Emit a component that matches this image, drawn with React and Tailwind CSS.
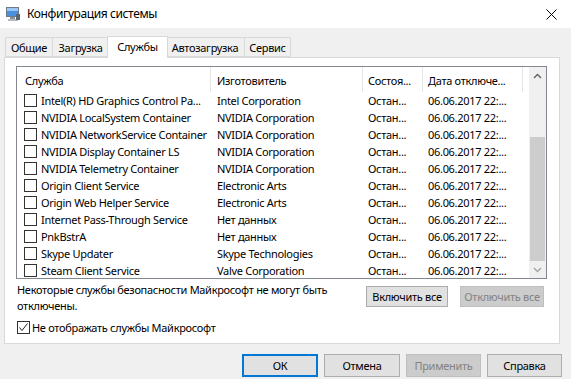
import React from 'react';

const services = [
  ['Intel(R) HD Graphics Control Pa...', 'Intel Corporation'],
  ['NVIDIA LocalSystem Container', 'NVIDIA Corporation'],
  ['NVIDIA NetworkService Container', 'NVIDIA Corporation'],
  ['NVIDIA Display Container LS', 'NVIDIA Corporation'],
  ['NVIDIA Telemetry Container', 'NVIDIA Corporation'],
  ['Origin Client Service', 'Electronic Arts'],
  ['Origin Web Helper Service', 'Electronic Arts'],
  ['Internet Pass-Through Service', 'Нет данных'],
  ['PnkBstrA', 'Нет данных'],
  ['Skype Updater', 'Skype Technologies'],
  ['Steam Client Service', 'Valve Corporation'],
];

const tabs = [
  ['Общие', 'w-[48px]'],
  ['Загрузка', 'w-[57px]'],
  ['Службы', 'w-[61px]'],
  ['Автозагрузка', 'w-[80px]'],
  ['Сервис', 'w-[47px]'],
];

function AppIcon() {
  return (
    <svg width="16" height="16" viewBox="0 0 16 16">
      <rect x="1" y="1" width="13" height="10" fill="#6d7a8c" />
      <rect x="2" y="2" width="11" height="8" fill="#4a8fe0" />
      <rect x="2" y="2" width="11" height="3" fill="#9cc7f5" />
      <rect x="5" y="11" width="5" height="2" fill="#8a8f96" />
      <rect x="3" y="13" width="10" height="2" fill="#b5b9bf" />
      <rect x="11" y="8" width="4" height="6" fill="#5c6470" />
    </svg>
  );
}

function Checkbox({ checked }) {
  return (
    <span className="w-[13px] h-[13px] border border-[#333333] bg-white flex items-center justify-center shrink-0">
      {checked && (
        <svg width="11" height="11" viewBox="0 0 11 11">
          <path d="M1.5 5.5 L4 8.5 L9.5 1.5" fill="none" stroke="#222" strokeWidth="1" />
        </svg>
      )}
    </span>
  );
}

function Button({ children, disabled, primary, className = '' }) {
  let cls = 'bg-[#e1e1e1] border border-[#adadad] text-black';
  if (disabled) cls = 'bg-[#cccccc] border border-[#bfbfbf] text-[#838383]';
  if (primary) cls = 'bg-[#e1e1e1] border-2 border-[#0078d7] text-black';
  return (
    <div className={`flex items-center justify-center whitespace-nowrap ${cls} ${className}`}>{children}</div>
  );
}

export default function App() {
  return (
    <div className="w-[571px] h-[379px] bg-[#f0f0f0] overflow-hidden text-[11px] tracking-[-0.3px] text-black font-['Noto_Sans',sans-serif] leading-none">
      {/* Title bar */}
      <div className="h-[28px] bg-white flex items-center pl-[5px] pr-[14px]">
        <AppIcon />
        <span className="ml-[6px] text-[12px] tracking-[-0.4px]">Конфигурация системы</span>
        <svg className="ml-auto" width="11" height="11" viewBox="0 0 11 11">
          <path d="M0.5 0.5 L10.5 10.5 M10.5 0.5 L0.5 10.5" stroke="#000" strokeWidth="1" />
        </svg>
      </div>

      {/* Tabs */}
      <div className="flex items-end h-[29px] pl-[5px]">
        {tabs.map(([t, w]) => (
          t === 'Службы' ? (
            <div key={t} className={`${w} h-[22px] -mx-[2px] bg-white border border-b-0 border-[#d9d9d9] flex items-center justify-center relative z-10 mb-[-1px] pb-[2px]`}>
              {t}
            </div>
          ) : (
            <div key={t} className={`${w} h-[20px] bg-[#f0f0f0] border border-[#d9d9d9] -ml-px first:ml-0 flex items-center justify-center`}>
              {t}
            </div>
          )
        ))}
      </div>

      {/* Panel */}
      <div className="mx-[4px] w-[556px] h-[287px] bg-white border border-[#d9d9d9] pt-[8px] pl-[11px] flex flex-col">
        {/* List */}
        <div className="w-[531px] h-[213px] border border-[#828790] flex">
          <div className="flex-1 flex flex-col overflow-hidden">
            <div className="h-[25px] flex shrink-0">
              <div className="w-[194px] pl-[8px] pt-[2px] flex items-center border-r border-[#e5e5e5]">Служба</div>
              <div className="w-[152px] pl-[6px] pt-[2px] flex items-center border-r border-[#e5e5e5]">Изготовитель</div>
              <div className="w-[60px] pl-[5px] pt-[2px] flex items-center border-r border-[#e5e5e5]">Состоя...</div>
              <div className="w-[100px] pl-[5px] pt-[2px] flex items-center border-r border-[#e5e5e5] whitespace-nowrap">Дата отключе...</div>
            </div>
            {services.map(([name, maker]) => (
              <div key={name} className="h-[17px] flex items-center shrink-0">
                <div className="w-[194px] pl-[7px] flex items-center gap-[4px]">
                  <Checkbox />
                  <span className="whitespace-nowrap">{name}</span>
                </div>
                <div className="w-[152px] pl-[6px] whitespace-nowrap">{maker}</div>
                <div className="w-[60px] pl-[5px] whitespace-nowrap">Остан...</div>
                <div className="w-[100px] pl-[5px] whitespace-nowrap">06.06.2017 22:...</div>
              </div>
            ))}
          </div>
          {/* Scrollbar */}
          <div className="w-[17px] bg-[#f0f0f0] flex flex-col">
            <div className="h-[17px] flex items-center justify-center">
              <svg width="9" height="6" viewBox="0 0 9 6">
                <path d="M1 5 L4.5 1.5 L8 5" fill="none" stroke="#606060" strokeWidth="1.4" />
              </svg>
            </div>
            <div className="flex-1 flex flex-col justify-end px-[1px]">
              <div className="h-[124px] bg-[#cdcdcd]" />
            </div>
            <div className="h-[17px] flex items-center justify-center">
              <svg width="9" height="6" viewBox="0 0 9 6">
                <path d="M1 1 L4.5 4.5 L8 1" fill="none" stroke="#a3a3a3" strokeWidth="1.4" />
              </svg>
            </div>
          </div>
        </div>

        {/* Notice + enable/disable */}
        <div className="flex items-start mt-[3px] pl-[1px]">
          <div className="flex-1 leading-[16px] whitespace-nowrap">
            Некоторые службы безопасности Майкрософт не могут быть
            <br />
            отключены.
          </div>
          <div className="flex gap-[12px] pr-[15px] mt-[4px]">
            <Button className="w-[82px] h-[21px]">Включить все</Button>
            <Button disabled className="w-[84px] h-[21px]">Отключить все</Button>
          </div>
        </div>

        <div className="flex items-center mt-[7px] pl-[1px] gap-[2px]">
          <Checkbox checked />
          <span>Не отображать службы Майкрософт</span>
        </div>
      </div>

      {/* Bottom buttons */}
      <div className="flex justify-end gap-[6px] pr-[9px] mt-[10px]">
        <Button primary className="w-[76px] h-[23px]">ОК</Button>
        <Button className="w-[76px] h-[23px]">Отмена</Button>
        <Button disabled className="w-[75px] h-[23px]">Применить</Button>
        <Button className="w-[75px] h-[23px]">Справка</Button>
      </div>
    </div>
  );
}
